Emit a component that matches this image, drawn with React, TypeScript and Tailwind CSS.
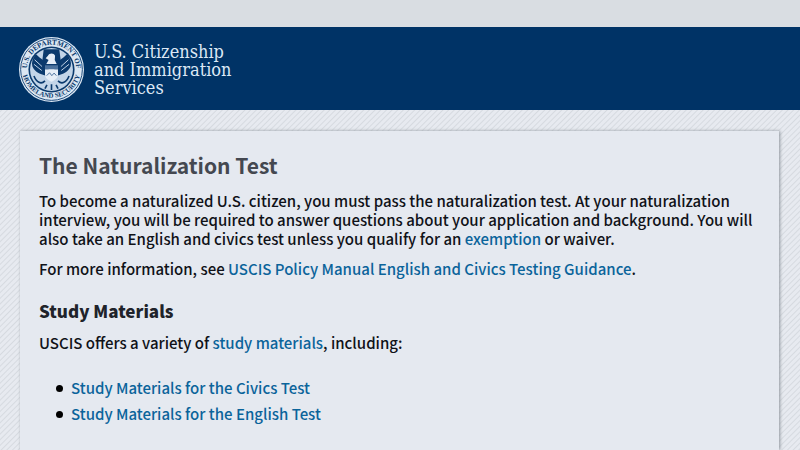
import { ReactNode } from "react";

const studyMaterials = [
  { label: "Study Materials for the Civics Test", href: "#civics" },
  { label: "Study Materials for the English Test", href: "#english" },
];

function Seal() {
  return (
    <svg viewBox="0 0 200 200" className="size-[65px] shrink-0" role="img" aria-label="U.S. Department of Homeland Security seal">
      <defs>
        <path id="seal-top" d="M 30 129 A 76 76 0 1 1 170 129" />
        <path id="seal-bottom" d="M 9 96 A 91 91 0 0 0 191 96" />
      </defs>
      <circle cx="100" cy="100" r="100" fill="#dbe7f3" />
      <circle cx="100" cy="100" r="95" fill="none" stroke="#1c4a7c" strokeWidth="3" />
      <g fill="#0b3a6d" fontWeight="700" fontFamily="'Liberation Serif', serif" textAnchor="middle">
        <text fontSize="22">
          <textPath href="#seal-top" startOffset="50%">U.S. DEPARTMENT OF</textPath>
        </text>
        <text fontSize="21">
          <textPath href="#seal-bottom" startOffset="50%">HOMELAND SECURITY</textPath>
        </text>
      </g>
      <circle cx="100" cy="100" r="71" fill="#0b3a6d" />
      <circle cx="100" cy="100" r="66" fill="#c3d5e8" />
      {/* wings */}
      <g fill="#0b3a6d">
        <path d="M90 76 C74 74 62 62 52 52 C42 64 38 78 41 90 C46 102 56 112 76 117 L92 122 Z" />
        <path d="M110 76 C126 74 138 62 148 52 C158 64 162 78 159 90 C154 102 144 112 124 117 L108 122 Z" />
        <path d="M76 38 H124 L129 78 L116 94 H84 L71 78 Z" />
      </g>
      {/* head and shield */}
      <g fill="#e6eef7">
        <path d="M89 58 C93 49 107 48 111 58 L110 71 L116 83 H84 L91 71 L82 65 Z" />
        <path d="M80 99 H120 V116 C119 127 110 133 100 138 C90 133 81 127 80 116 Z" />
      </g>
      <path d="M80 87 H120 V99 H80 Z" fill="#4d739e" />
      {/* branch, arrows and tail */}
      <g fill="none" stroke="#0b3a6d" strokeWidth="5">
        <path d="M46 120 C54 140 68 147 80 135 M154 120 C146 140 132 147 120 135" />
        <path d="M86 147 L80 159 M100 145 V163 M114 147 L120 159" />
      </g>
      <g fill="none" stroke="#c3d5e8" strokeWidth="3">
        <path d="M48 70 L71 91 M46 84 L70 103 M152 70 L129 91 M154 84 L130 103" />
      </g>
      <path d="M85 119 L94 110 L101 119 L108 111 L115 119" fill="none" stroke="#4d739e" strokeWidth="3" />
    </svg>
  );
}

function TextLink({ href, children }: { href: string; children: ReactNode }) {
  return (
    <a href={href} className="text-[#0b649b] hover:underline">
      {children}
    </a>
  );
}

export default function App() {
  return (
    <div className="flex min-h-screen flex-col bg-[#e5e9f0] bg-[repeating-linear-gradient(135deg,#e7eaf0_0px,#e7eaf0_2px,#d6dae0_3px,#e7eaf0_4px)] font-['Noto_Sans_CJK_SC',sans-serif] font-medium text-[#101218]">
      <div className="h-[27px] bg-[#d9dde2]" />
      <header className="flex items-center gap-2.5 bg-[#003366] px-[19px] pt-2.5 pb-2">
        <Seal />
        <p className="font-['DejaVu_Serif_Condensed','DejaVu_Serif',serif] text-[18px] leading-[18px] font-normal text-[#dce8f5]">
          U.S. Citizenship
          <br />
          and Immigration
          <br />
          Services
        </p>
      </header>

      <main className="mr-[21px] ml-5 mt-[21px] flex-1 bg-[#e5e9f0] px-[19px] pt-5 text-[15px] leading-[19px] shadow-[1px_0px_3px_#8f959d]">
        <h1 className="mb-3 text-[21px] leading-7 font-bold text-[#444850]">The Naturalization Test</h1>
        <p className="mb-[11px]">
          To become a naturalized U.S. citizen, you must pass the naturalization test. At your naturalization
          interview, you will be required to answer questions about your application and background. You will also
          take an English and civics test unless you qualify for an <TextLink href="#exemption">exemption</TextLink> or
          waiver.
        </p>
        <p className="mb-[21px]">
          For more information, see{" "}
          <TextLink href="#guidance">USCIS Policy Manual English and Civics Testing Guidance</TextLink>.
        </p>
        <h2 className="mb-2.5 text-[17px] leading-6 font-black text-[#20232a]">Study Materials</h2>
        <p className="mb-[23px]">
          USCIS offers a variety of <TextLink href="#study">study materials</TextLink>, including:
        </p>
        <ul className="pl-[17px] leading-[26px]">
          {studyMaterials.map((item) => (
            <li key={item.href} className="flex items-center gap-2 before:size-[7px] before:rounded-full before:bg-black">
              <TextLink href={item.href}>{item.label}</TextLink>
            </li>
          ))}
        </ul>
      </main>
    </div>
  );
}
